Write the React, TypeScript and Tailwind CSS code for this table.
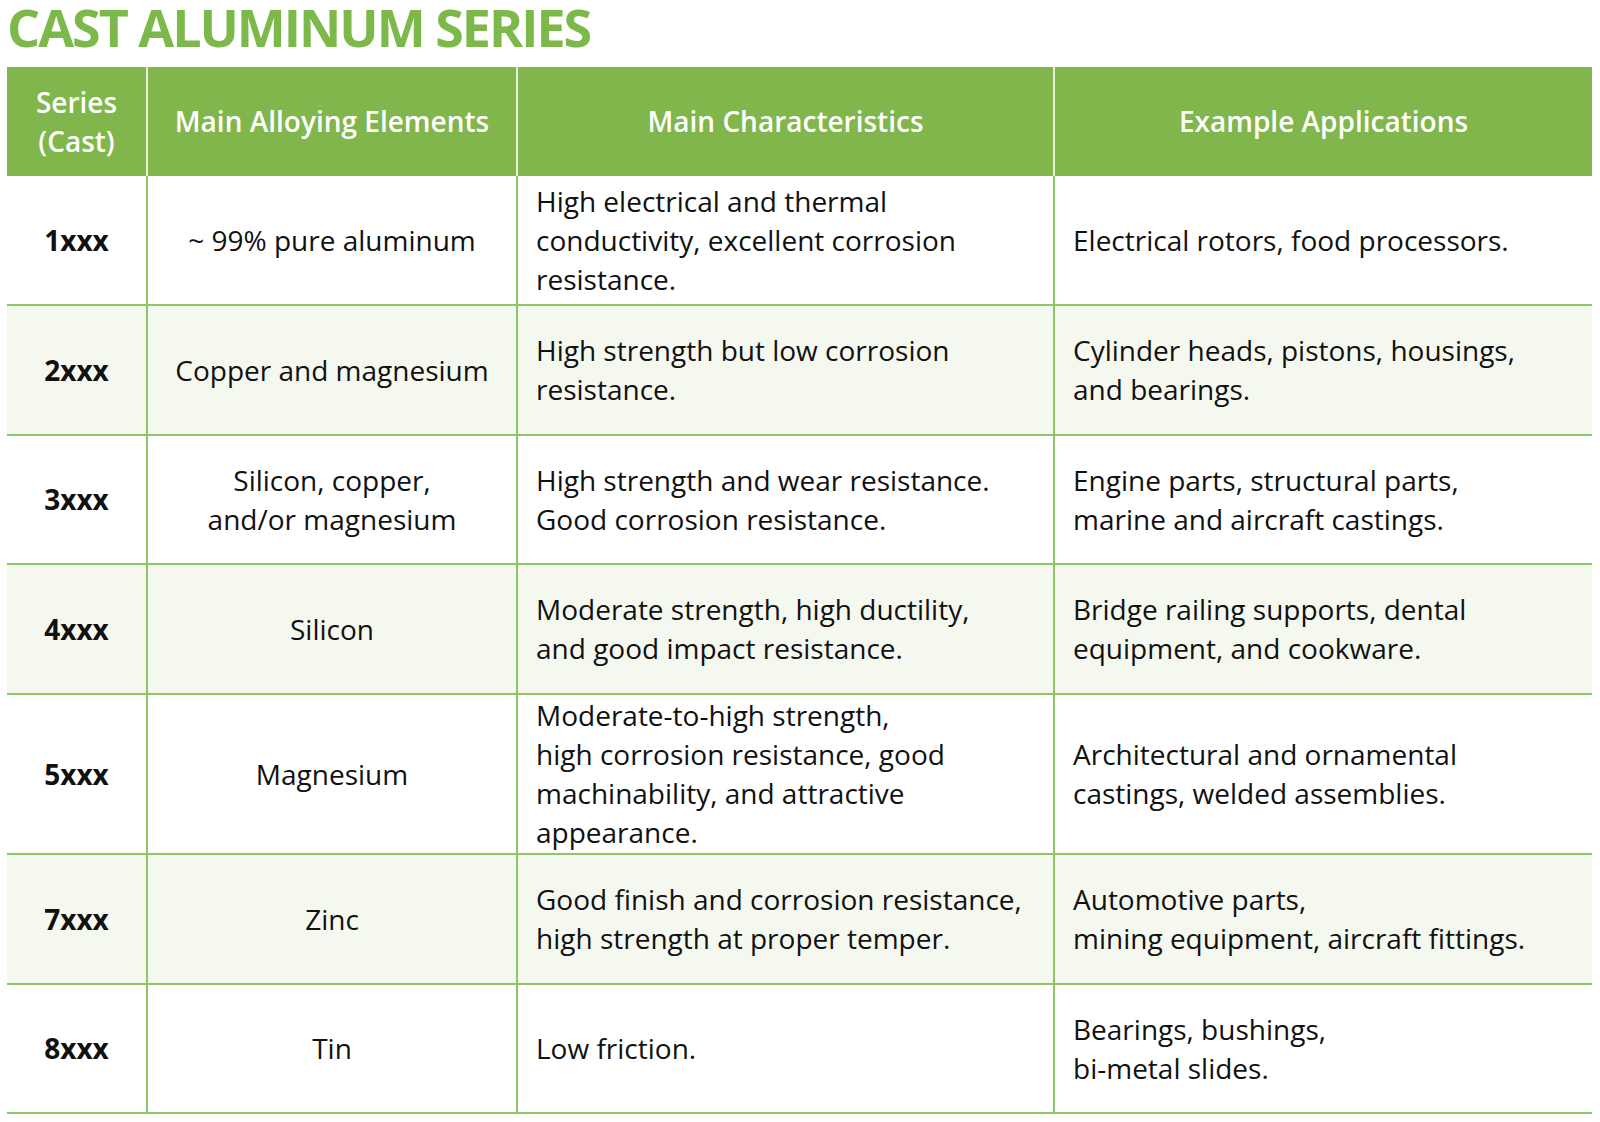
const rows = [
  {
    series: '1xxx',
    elements: ['~ 99% pure aluminum'],
    traits: ['High electrical and thermal', 'conductivity, excellent corrosion', 'resistance.'],
    uses: ['Electrical rotors, food processors.'],
    h: 'h-[130px]',
    bg: 'bg-white',
  },
  {
    series: '2xxx',
    elements: ['Copper and magnesium'],
    traits: ['High strength but low corrosion', 'resistance.'],
    uses: ['Cylinder heads, pistons, housings,', 'and bearings.'],
    h: 'h-[130px]',
    bg: 'bg-[#f5f8ef]',
  },
  {
    series: '3xxx',
    elements: ['Silicon, copper,', 'and/or magnesium'],
    traits: ['High strength and wear resistance.', 'Good corrosion resistance.'],
    uses: ['Engine parts, structural parts,', 'marine and aircraft castings.'],
    h: 'h-[129px]',
    bg: 'bg-white',
  },
  {
    series: '4xxx',
    elements: ['Silicon'],
    traits: ['Moderate strength, high ductility,', 'and good impact resistance.'],
    uses: ['Bridge railing supports, dental', 'equipment, and cookware.'],
    h: 'h-[130px]',
    bg: 'bg-[#f5f8ef]',
  },
  {
    series: '5xxx',
    elements: ['Magnesium'],
    traits: ['Moderate-to-high strength,', 'high corrosion resistance, good', 'machinability, and attractive', 'appearance.'],
    uses: ['Architectural and ornamental', 'castings, welded assemblies.'],
    h: 'h-[160px]',
    bg: 'bg-white',
  },
  {
    series: '7xxx',
    elements: ['Zinc'],
    traits: ['Good finish and corrosion resistance,', 'high strength at proper temper.'],
    uses: ['Automotive parts,', 'mining equipment, aircraft fittings.'],
    h: 'h-[130px]',
    bg: 'bg-[#f5f8ef]',
  },
  {
    series: '8xxx',
    elements: ['Tin'],
    traits: ['Low friction.'],
    uses: ['Bearings, bushings,', 'bi-metal slides.'],
    h: 'h-[129px]',
    bg: 'bg-white',
  },
];

const Lines = ({ lines }: { lines: string[] }) => (
  <div>
    {lines.map((l) => (
      <div key={l} className="whitespace-nowrap">
        {l}
      </div>
    ))}
  </div>
);

const App = () => {
  return (
    <div className="w-[1600px] h-[1122px] bg-white font-['Open_Sans',sans-serif]">
      <h1 className="pl-[7px] h-[67px] text-[52px] leading-[54px] font-bold tracking-[-2px] text-[#7db84a]">
        CAST ALUMINUM SERIES
      </h1>

      <div className="ml-[7px] w-[1585px]">
        {/* header */}
        <div className="grid grid-cols-[139px_370px_537px_539px] h-[109px] bg-[#80b64c] text-white text-[28px] leading-[39px] font-semibold text-center">
          <div className="flex items-center justify-center">
            <Lines lines={['Series', '(Cast)']} />
          </div>
          <div className="flex items-center justify-center border-l-2 border-[#e3f0d6]">
            Main Alloying Elements
          </div>
          <div className="flex items-center justify-center border-l-2 border-[#e3f0d6]">
            Main Characteristics
          </div>
          <div className="flex items-center justify-center border-l-2 border-[#e3f0d6]">
            Example Applications
          </div>
        </div>

        {rows.map((r) => (
          <div
            key={r.series}
            className={`grid grid-cols-[139px_370px_537px_539px] border-b-2 border-[#8cc665] text-[28px] leading-[39px] text-[#111] ${r.h} ${r.bg}`}
          >
            <div className="flex items-center justify-center font-bold">{r.series}</div>
            <div className="flex items-center justify-center text-center border-l-2 border-[#8cc665]">
              <Lines lines={r.elements} />
            </div>
            <div className="flex items-center pl-[18px] border-l-2 border-[#8cc665]">
              <Lines lines={r.traits} />
            </div>
            <div className="flex items-center pl-[18px] border-l-2 border-[#8cc665]">
              <Lines lines={r.uses} />
            </div>
          </div>
        ))}
      </div>
    </div>
  );
};

export default App;
